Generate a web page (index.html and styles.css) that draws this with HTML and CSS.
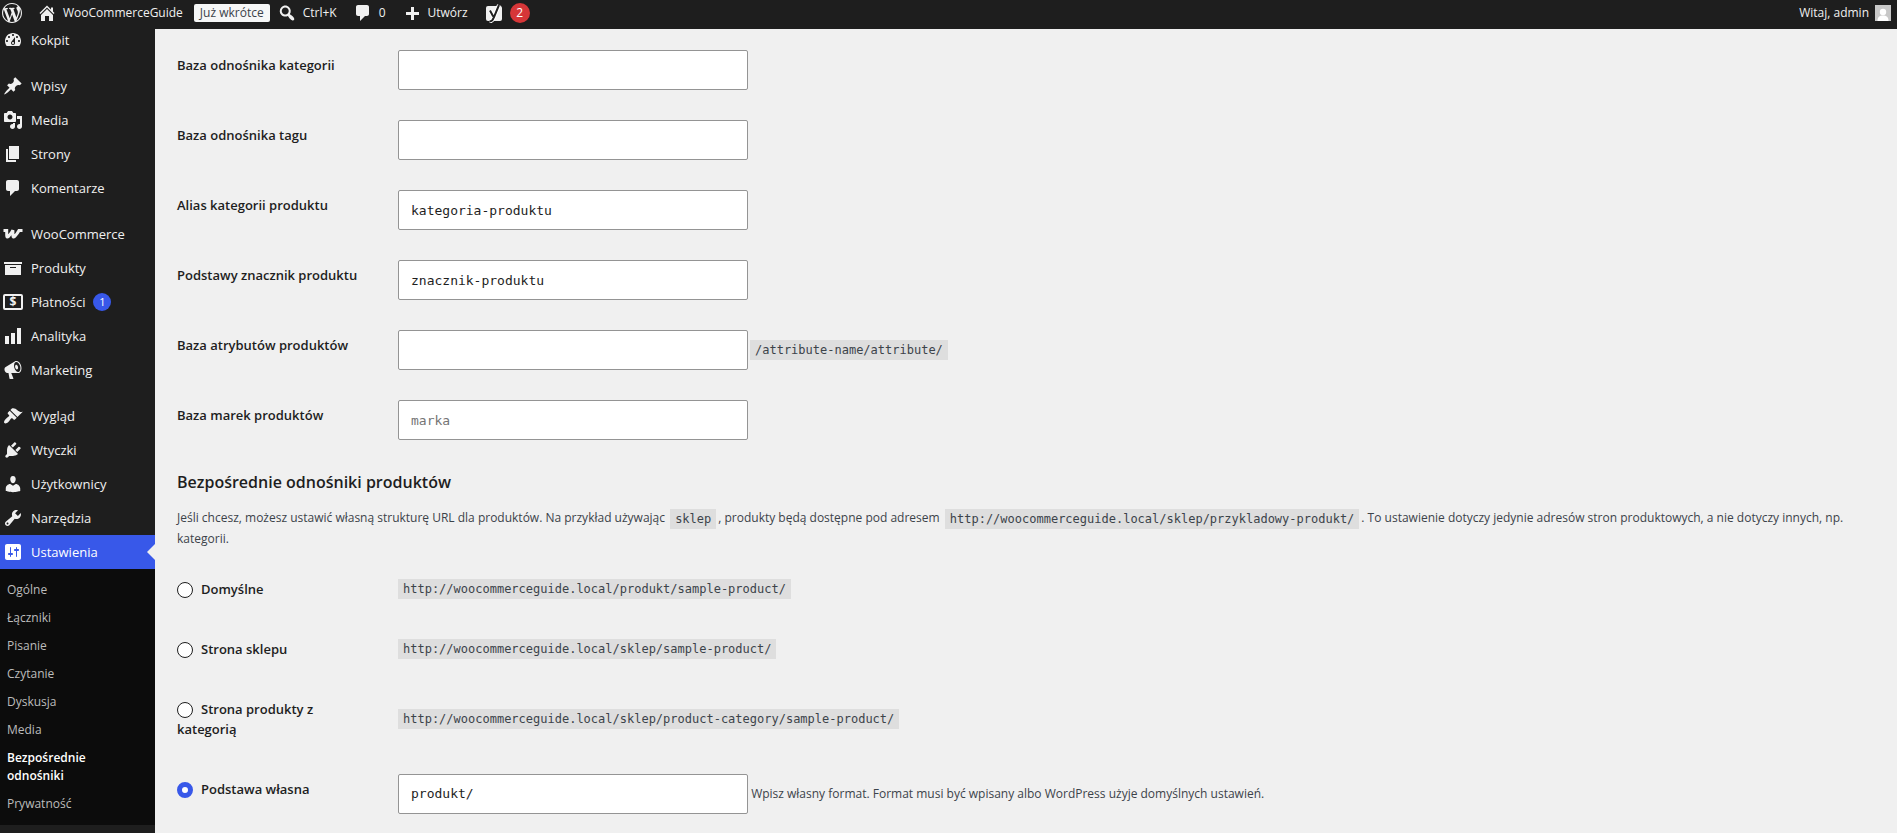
FILE: index.html
```
<!DOCTYPE html>
<html lang="pl">
<head>
  <meta charset="UTF-8">
  <meta name="viewport" content="width=device-width, initial-scale=1.0">
  <title>Bezpośrednie odnośniki - WooCommerceGuide</title>
  <link rel="stylesheet" href="styles.css">
</head>
<body>
  <header class="adminbar">
    <a href="#" class="bar-item bar-logo" aria-label="O WordPressie">
      <svg class="icon" viewBox="0 0 20 20"><path d="M20 10c0-5.51-4.49-10-10-10C4.48 0 0 4.49 0 10c0 5.52 4.48 10 10 10 5.51 0 10-4.48 10-10zM7.78 15.37L4.37 6.22c.55-.02 1.17-.08 1.17-.08.5-.06.44-1.13-.06-1.11 0 0-1.45.11-2.37.11-.18 0-.37 0-.58-.01C4.12 2.69 6.87 1.11 10 1.11c2.33 0 4.45.87 6.05 2.34-.68-.11-1.65.39-1.65 1.58 0 .74.45 1.36.9 2.1.35.61.55 1.36.55 2.46 0 1.49-1.4 5-1.4 5l-3.03-8.37c.54-.02.82-.17.82-.17.5-.05.44-1.25-.06-1.22 0 0-1.44.12-2.38.12-.87 0-2.33-.12-2.33-.12-.5-.03-.56 1.2-.06 1.22l.92.08 1.26 3.41zM17.41 10c.24-.64.74-1.87.43-4.25.7 1.29 1.05 2.71 1.05 4.25 0 3.29-1.73 6.24-4.4 7.78.97-2.59 1.94-5.2 2.92-7.78zM6.1 18.09C3.12 16.65 1.11 13.53 1.11 10c0-1.3.23-2.48.72-3.59C3.25 10.3 4.67 14.2 6.1 18.09zm4.03-6.63l2.58 6.98c-.86.29-1.76.45-2.71.45-.79 0-1.57-.11-2.29-.33.81-2.38 1.62-4.74 2.42-7.1z"/></svg>
    </a>
    <a href="#" class="bar-item bar-site">
      <svg class="icon" viewBox="0 0 20 20"><path d="M16 8.5l1.53 1.53-1.06 1.06L10 4.6l-6.47 6.49-1.06-1.06L10 2.5l4 4v-2h2v4zm-6-2.46l6 5.99V18h-4v-5H8v5H4v-5.97z"/></svg>
      <span>WooCommerceGuide</span>
    </a>
    <a href="#" class="soon-badge">Już wkrótce</a>
    <button type="button" class="bar-item">
      <svg class="icon" viewBox="0 0 20 20"><path d="M12.14 4.18c1.87 1.87 2.11 4.75.72 6.89.12.1.22.21.36.31.2.16.47.36.81.59.34.24.56.39.66.47.42.31.73.57.94.78.32.32.6.65.84 1 .25.35.44.69.59 1.04.14.35.21.68.18 1-.02.32-.14.59-.36.81s-.49.34-.81.36c-.31.02-.65-.04-.99-.19-.35-.14-.7-.34-1.04-.59-.35-.24-.68-.52-1-.84-.21-.21-.47-.52-.77-.93-.1-.13-.25-.35-.47-.66-.22-.32-.4-.57-.56-.78-.16-.2-.29-.35-.44-.5-2.07 1.09-4.69.76-6.44-.98-2.14-2.15-2.14-5.64 0-7.78 2.15-2.15 5.63-2.15 7.78 0zm-1.41 6.36c1.36-1.37 1.36-3.58 0-4.95-1.37-1.37-3.59-1.37-4.95 0-1.37 1.37-1.37 3.58 0 4.95 1.36 1.37 3.58 1.37 4.95 0z"/></svg>
      <span>Ctrl+K</span>
    </button>
    <a href="#" class="bar-item">
      <svg class="icon" viewBox="0 0 20 20"><path d="M5 2h9c1.1 0 2 .9 2 2v7c0 1.1-.9 2-2 2h-2l-5 5v-5H5c-1.1 0-2-.9-2-2V4c0-1.1.9-2 2-2z"/></svg>
      <span>0</span>
    </a>
    <a href="#" class="bar-item">
      <svg class="icon" viewBox="0 0 20 20"><path d="M17 9v3h-5v5H9v-5H4V9h5V4h3v5z"/></svg>
      <span>Utwórz</span>
    </a>
    <a href="#" class="bar-item bar-seo" aria-label="Yoast SEO">
      <svg class="icon" viewBox="0 0 20 20"><rect x="2" y="3" width="16" height="15" rx="2"/><path class="seo-edge" d="M6 7.5l3.2 6M15 2L9.8 14.5Q8.5 18.3 5.5 18.5"/><path class="seo-mark" d="M6 7.5l3.2 6M15 2L9.8 14.5Q8.5 18.3 5.5 18.5"/></svg>
      <span class="seo-count">2</span>
    </a>
    <a href="#" class="bar-item bar-user">
      <span>Witaj, admin</span>
      <svg class="avatar" viewBox="0 0 16 16"><rect width="16" height="16" fill="#c8c8c8"/><circle cx="8" cy="7" r="3.2" fill="#fff"/><path d="M2.5 16c0-4 2-5.5 5.500-5.500s5.500 1.500 5.500 5.500z" fill="#fff"/></svg>
    </a>
  </header>

  <div class="layout">
    <nav class="sidebar" aria-label="Menu główne">
      <ul class="menu">
        <li><a href="#"><svg class="icon" viewBox="0 0 20 20"><path d="M3.76 16h12.48c1.1-1.37 1.76-3.11 1.76-5 0-4.42-3.58-8-8-8s-8 3.58-8 8c0 1.89.66 3.63 1.76 5zM10 4c.55 0 1 .45 1 1s-.45 1-1 1-1-.45-1-1 .45-1 1-1zM6 6c.55 0 1 .45 1 1s-.45 1-1 1-1-.45-1-1 .45-1 1-1zm8 0c.55 0 1 .45 1 1s-.45 1-1 1-1-.45-1-1 .45-1 1-1zm-5.37 5.55L12 7v6c0 1.1-.9 2-2 2s-2-.9-2-2c0-.57.24-1.08.63-1.45zM4 10c.55 0 1 .45 1 1s-.45 1-1 1-1-.45-1-1 .45-1 1-1zm12 0c.55 0 1 .45 1 1s-.45 1-1 1-1-.45-1-1 .45-1 1-1zm-5 3c0-.55-.45-1-1-1s-1 .45-1 1 .45 1 1 1 1-.45 1-1z"/></svg><span>Kokpit</span></a></li>
        <li class="group"><a href="#"><svg class="icon" viewBox="0 0 20 20"><path d="M10.44 3.02l1.82-1.82 6.36 6.35-1.83 1.82c-1.05-.68-2.48-.57-3.41.36l-.75.75c-.92.93-1.04 2.35-.35 3.41l-1.83 1.82-2.41-2.41-2.8 2.79c-.42.42-3.38 2.71-3.8 2.29s1.86-3.39 2.28-3.81l2.79-2.79L4.1 9.36l1.83-1.82c1.05.69 2.48.57 3.4-.36l.75-.75c.93-.92 1.05-2.35.36-3.41z"/></svg><span>Wpisy</span></a></li>
        <li><a href="#"><svg class="icon" viewBox="0 0 20 20"><path d="M13 11V4c0-.55-.45-1-1-1h-1.67L9 1H5L3.67 3H2c-.55 0-1 .45-1 1v7c0 .55.45 1 1 1h10c.55 0 1-.45 1-1zM7 4.5c1.38 0 2.5 1.12 2.5 2.5S8.38 9.5 7 9.5 4.5 8.38 4.5 7 5.62 4.5 7 4.5zM14 6h5v10.5c0 1.38-1.12 2.5-2.5 2.5S14 17.88 14 16.5s1.12-2.5 2.5-2.5c.17 0 .34.02.5.05V9h-3V6zm-4 8.05V13h2v3.5c0 1.38-1.12 2.5-2.5 2.5S7 17.88 7 16.5 8.12 14 9.5 14c.17 0 .34.02.5.05z"/></svg><span>Media</span></a></li>
        <li><a href="#"><svg class="icon" viewBox="0 0 20 20"><path d="M6 15V2h10v13H6zm-1 1h8v2H3V5h2v11z"/></svg><span>Strony</span></a></li>
        <li><a href="#"><svg class="icon" viewBox="0 0 20 20"><path d="M5 2h9c1.1 0 2 .9 2 2v7c0 1.1-.9 2-2 2h-2l-5 5v-5H5c-1.1 0-2-.9-2-2V4c0-1.1.9-2 2-2z"/></svg><span>Komentarze</span></a></li>
        <li class="group"><a href="#"><svg class="icon" viewBox="0 0 20 20"><path class="woo-mark" d="M.5 6.5h3.2v4.7q0 3 1.8 1.2Q8.3 9.5 9.9 6.2v5q0 3 1.8 1.2Q14.5 9.5 16 6.5h3.5"/></svg><span>WooCommerce</span></a></li>
        <li><a href="#"><svg class="icon" viewBox="0 0 20 20"><path d="M19 4v2H1V4h18zM2 7h16v10H2V7zm11 3V9H7v1h6z"/></svg><span>Produkty</span></a></li>
        <li><a href="#"><svg class="icon" viewBox="0 0 20 20"><rect class="pay-frame" x="1" y="3" width="18" height="14" rx="1"/><text class="pay-sign" x="10" y="14" text-anchor="middle">$</text></svg><span>Płatności</span><span class="count">1</span></a></li>
        <li><a href="#"><svg class="icon" viewBox="0 0 20 20"><path d="M18 18V2h-4v16h4zm-6 0V7H8v11h4zm-6 0v-8H2v8h4z"/></svg><span>Analityka</span></a></li>
        <li><a href="#"><svg class="icon" viewBox="0 0 20 20"><path d="M18.15 5.94c.46 1.62.38 3.22-.02 4.48-.42 1.28-1.26 2.18-2.3 2.48-.16.06-.26.06-.4.06-.06.02-.12.02-.18.02-.06.02-.14.02-.22.02h-6.8l2.22 5.5c.02.14-.06.26-.14.34-.08.1-.24.16-.34.16H6.95c-.1 0-.26-.06-.34-.16-.08-.08-.16-.2-.14-.34l-1-5.5H4.25l-.02-.02c-.5.06-1.08-.18-1.54-.62s-.88-1.08-1.06-1.88c-.24-.8-.2-1.56-.02-2.2.18-.62.58-1.08 1.06-1.3l.02-.02 9-5.4c.1-.06.18-.1.24-.16.06-.04.14-.08.24-.12.16-.08.28-.12.5-.18 1.04-.3 2.24.1 3.22.98s1.84 2.24 2.26 3.86zm-2.58 5.98h-.02c.4-.1.74-.34 1.04-.7.58-.7.86-1.76.86-3.04 0-.64-.1-1.3-.28-1.98-.34-1.36-1.02-2.5-1.78-3.24s-1.68-1.1-2.46-.88c-.82.22-1.4.96-1.7 2-.32 1.04-.28 2.36.06 3.72.38 1.36 1 2.5 1.8 3.24.78.74 1.62 1.1 2.48.88zm-2.54-7.08c.22-.04.42-.02.62.04.38.16.76.48 1.02 1s.42 1.2.42 1.78c0 .3-.04.56-.12.8-.18.48-.44.84-.86.94-.34.1-.8-.06-1.14-.4s-.64-.86-.78-1.5c-.18-.62-.12-1.24.02-1.72s.48-.84.82-.94z"/></svg><span>Marketing</span></a></li>
        <li class="group"><a href="#"><svg class="icon" viewBox="0 0 20 20"><path d="M14.48 11.06L7.41 3.99l1.5-1.5c.5-.56 2.3-.47 3.51.32 1.21.8 1.43 1.28 2.91 2.1 1.18.64 2.45 1.26 4.45.85zm-.71.71L6.7 4.7 4.93 6.47c-.39.39-.39 1.02 0 1.41l1.06 1.06c.39.39.39 1.03 0 1.42-.6.6-1.43 1.11-2.21 1.69-.35.26-.7.53-1.01.84C1.43 14.23.4 16.08 1.4 17.07c.99 1 2.84-.03 4.18-1.36.31-.31.58-.66.85-1.02.57-.78 1.08-1.61 1.69-2.21.39-.39 1.02-.39 1.41 0l1.06 1.06c.39.39 1.02.39 1.41 0z"/></svg><span>Wygląd</span></a></li>
        <li><a href="#"><svg class="icon" viewBox="0 0 20 20"><path d="M13.11 4.36L9.87 7.6 8 5.73l3.24-3.24c.35-.34 1.05-.2 1.56.32.52.51.66 1.21.31 1.55zm-8 1.77l.91-1.12 9.01 9.01-1.19.84c-.71.71-2.63 1.16-3.82 1.16H6.14L4.9 17.26c-.59.59-1.54.59-2.12 0-.59-.58-.59-1.53 0-2.12l1.24-1.24v-3.88c0-1.13.4-3.19 1.09-3.89zm7.26 3.97l3.24-3.24c.34-.35 1.04-.21 1.55.31.52.51.66 1.21.31 1.55l-3.24 3.25z"/></svg><span>Wtyczki</span></a></li>
        <li><a href="#"><svg class="icon" viewBox="0 0 20 20"><path d="M10 9.25c-2.27 0-2.73-3.44-2.73-3.44C7 4.02 7.82 2 9.97 2c2.16 0 2.98 2.02 2.71 3.81 0 0-.41 3.44-2.68 3.44zm0 2.57L12.72 10c2.39 0 4.52 2.33 4.52 4.53v2.49s-3.65 1.13-7.24 1.13c-3.65 0-7.24-1.13-7.24-1.13v-2.49c0-2.25 1.94-4.48 4.47-4.48z"/></svg><span>Użytkownicy</span></a></li>
        <li><a href="#"><svg class="icon" viewBox="0 0 20 20"><path d="M16.68 9.77c-1.34 1.34-3.3 1.67-4.95.99l-5.41 6.52c-.99.99-2.59.99-3.58 0s-.99-2.59 0-3.57l6.52-5.42c-.68-1.65-.35-3.61.99-4.95 1.28-1.28 3.12-1.62 4.72-1.06l-2.89 2.89 2.82 2.82 2.86-2.87c.53 1.58.18 3.39-1.08 4.65zM3.81 16.21c.4.39 1.04.39 1.43 0 .4-.4.4-1.04 0-1.43-.39-.4-1.03-.4-1.43 0-.39.39-.39 1.03 0 1.43z"/></svg><span>Narzędzia</span></a></li>
        <li class="current"><a href="#"><svg class="icon" viewBox="0 0 20 20"><path d="M18 16V4c0-1.1-.9-2-2-2H4c-1.1 0-2 .9-2 2v12c0 1.1.9 2 2 2h12c1.1 0 2-.9 2-2zM8 11h1c.55 0 1 .45 1 1s-.45 1-1 1H8v1.5c0 .28-.22.5-.5.5s-.5-.22-.5-.5V13H6c-.55 0-1-.45-1-1s.45-1 1-1h1V5.5c0-.28.22-.5.5-.5s.5.22.5.5V11zm5-2h-1c-.55 0-1-.45-1-1s.45-1 1-1h1V5.5c0-.28.22-.5.5-.5s.5.22.5.5V7h1c.55 0 1 .45 1 1s-.45 1-1 1h-1v5.5c0 .28-.22.5-.5.5s-.5-.22-.5-.5V9z"/></svg><span>Ustawienia</span></a></li>
      </ul>
      <ul class="submenu">
        <li><a href="#">Ogólne</a></li>
        <li><a href="#">Łączniki</a></li>
        <li><a href="#">Pisanie</a></li>
        <li><a href="#">Czytanie</a></li>
        <li><a href="#">Dyskusja</a></li>
        <li><a href="#">Media</a></li>
        <li><a href="#" class="active">Bezpośrednie odnośniki</a></li>
        <li><a href="#">Prywatność</a></li>
      </ul>
    </nav>

    <main class="content">
      <form>
        <table class="form-table">
          <tr>
            <th scope="row"><label for="category_base">Baza odnośnika kategorii</label></th>
            <td><input type="text" id="category_base" class="text-input"></td>
          </tr>
          <tr>
            <th scope="row"><label for="tag_base">Baza odnośnika tagu</label></th>
            <td><input type="text" id="tag_base" class="text-input"></td>
          </tr>
          <tr>
            <th scope="row"><label for="product_category">Alias kategorii produktu</label></th>
            <td><input type="text" id="product_category" class="text-input" value="kategoria-produktu"></td>
          </tr>
          <tr>
            <th scope="row"><label for="product_tag">Podstawy znacznik produktu</label></th>
            <td><input type="text" id="product_tag" class="text-input" value="znacznik-produktu"></td>
          </tr>
          <tr>
            <th scope="row"><label for="attribute_base">Baza atrybutów produktów</label></th>
            <td><input type="text" id="attribute_base" class="text-input"><code>/attribute-name/attribute/</code></td>
          </tr>
          <tr>
            <th scope="row"><label for="brand_base">Baza marek produktów</label></th>
            <td><input type="text" id="brand_base" class="text-input" placeholder="marka"></td>
          </tr>
        </table>

        <h2>Bezpośrednie odnośniki produktów</h2>
        <p class="intro">Jeśli chcesz, możesz ustawić własną strukturę URL dla produktów. Na przykład używając <code>sklep</code>, produkty będą dostępne pod adresem <code>http://woocommerceguide.local/sklep/przykladowy-produkt/</code>. To ustawienie dotyczy jedynie adresów stron produktowych, a nie dotyczy innych, np. kategorii.</p>

        <table class="form-table">
          <tr>
            <th scope="row"><label><input type="radio" name="product_permalink">Domyślne</label></th>
            <td><code>http://woocommerceguide.local/produkt/sample-product/</code></td>
          </tr>
          <tr>
            <th scope="row"><label><input type="radio" name="product_permalink">Strona sklepu</label></th>
            <td><code>http://woocommerceguide.local/sklep/sample-product/</code></td>
          </tr>
          <tr>
            <th scope="row"><label><input type="radio" name="product_permalink">Strona produkty z kategorią</label></th>
            <td><code>http://woocommerceguide.local/sklep/product-category/sample-product/</code></td>
          </tr>
          <tr>
            <th scope="row"><label><input type="radio" name="product_permalink" checked>Podstawa własna</label></th>
            <td><input type="text" class="text-input" value="produkt/" aria-label="Podstawa własna"> <span class="description">Wpisz własny format. Format musi być wpisany albo WordPress użyje domyślnych ustawień.</span></td>
          </tr>
        </table>
      </form>
    </main>
  </div>
</body>
</html>
```
FILE: styles.css
```
* {
  margin: 0;
  padding: 0;
  box-sizing: border-box;
}
body {
  font-family: "Open Sans", "Noto Sans", sans-serif;
  font-size: 12px;
  line-height: 20px;
  min-height: 100vh;
  display: flex;
  flex-direction: column;
  background: #f0f0f0;
  color: #3c434a;
}
a {
  color: inherit;
  text-decoration: none;
}
ul {
  list-style: none;
}
.icon {
  width: 20px;
  height: 20px;
  flex: none;
  fill: currentColor;
}

/* Górny pasek */
.adminbar {
  position: relative;
  z-index: 2;
  display: flex;
  align-items: center;
  height: 29px;
  padding: 0 6px 3px 2px;
  background: #1e1e1e;
  color: #f0f0f0;
}
.bar-item {
  display: flex;
  align-items: center;
  gap: 6px;
  margin-right: 16px;
  border: 0;
  background: none;
  color: inherit;
  font: inherit;
}
.bar-logo {
  margin-right: 15px;
}
.bar-site {
  margin-right: 11px;
}
.soon-badge {
  padding: 0 6px;
  margin-right: 7px;
  border-radius: 2px;
  background: #f6f7f7;
  color: #3c434a;
  line-height: 18px;
}
.bar-seo {
  margin-right: auto;
}
.seo-edge,
.seo-mark {
  fill: none;
  stroke: #fff;
  stroke-width: 4;
}
.seo-mark {
  stroke: #1e1e1e;
  stroke-width: 2;
}
.seo-count {
  width: 20px;
  height: 20px;
  border-radius: 10px;
  background: #d63638;
  color: #fff;
  text-align: center;
}
.bar-user {
  margin-right: 0;
}
.avatar {
  width: 16px;
  height: 16px;
}

/* Menu boczne */
.layout {
  flex: 1;
  display: flex;
}
.sidebar {
  flex: none;
  width: 155px;
  background: #1e1e1e;
  color: #f0f0f0;
}
.menu {
  margin-top: -6px;
}
.menu a {
  display: flex;
  align-items: center;
  gap: 8px;
  height: 34px;
  padding-left: 3px;
  font-size: 13px;
  font-weight: 500;
}
.group {
  margin-top: 12px;
}
.count {
  width: 18px;
  height: 18px;
  border-radius: 9px;
  background: #3858e9;
  color: #fff;
  font-size: 11px;
  line-height: 18px;
  text-align: center;
}
.current {
  position: relative;
  background: #3858e9;
  color: #fff;
}
.current::after {
  content: "";
  position: absolute;
  right: 0;
  top: 9px;
  border: 8px solid transparent;
  border-left-width: 0;
  border-right-color: #f0f0f0;
}
.woo-mark {
  fill: none;
  stroke: currentColor;
  stroke-width: 3;
}
.pay-frame {
  fill: none;
  stroke: currentColor;
  stroke-width: 2;
}
.pay-sign {
  font-size: 12px;
  font-weight: 700;
}
.submenu {
  padding: 7px 0;
  background: #0c0c0c;
  color: #bcbcbc;
}
.submenu a {
  display: block;
  padding: 5px 40px 5px 7px;
  line-height: 18px;
}
.submenu .active {
  color: #fff;
  font-weight: 600;
}

/* Formularz */
.content {
  flex: 1;
  min-width: 0;
  padding: 6px 20px 4px 22px;
}
.form-table {
  width: 100%;
  border-collapse: collapse;
}
.form-table th {
  width: 211px;
  padding: 20px 24px 20px 0;
  vertical-align: top;
  text-align: left;
  color: #1e1e1e;
  font-size: 13px;
  font-weight: 600;
}
.form-table td {
  padding: 15px 10px;
  vertical-align: middle;
}
.text-input {
  width: 350px;
  height: 40px;
  padding: 0 12px;
  border: 1px solid #949494;
  border-radius: 2px;
  background: #fff;
  color: #1e1e1e;
  font-family: "DejaVu Sans Mono", monospace;
  font-size: 13px;
  vertical-align: middle;
}
.text-input::placeholder {
  color: #757575;
}
code {
  display: inline-block;
  margin: 0 2px;
  padding: 0 5px;
  background: #dedede;
  font-family: "DejaVu Sans Mono", monospace;
  font-size: 12px;
  line-height: 20px;
  vertical-align: middle;
}
td > code:first-child {
  margin-left: 0;
}
input[type="radio"] {
  appearance: none;
  width: 16px;
  height: 16px;
  margin-right: 8px;
  border: 1px solid #1e1e1e;
  border-radius: 50%;
  background: #fff;
  vertical-align: middle;
}
input[type="radio"]:checked {
  border: 5px solid #3858e9;
}
h2 {
  margin-top: 15px;
  color: #1e1e1e;
  font-size: 16px;
  font-weight: 600;
  line-height: 24px;
}
.intro {
  margin: 14px 0 10px;
}
.description {
  vertical-align: middle;
}
```
